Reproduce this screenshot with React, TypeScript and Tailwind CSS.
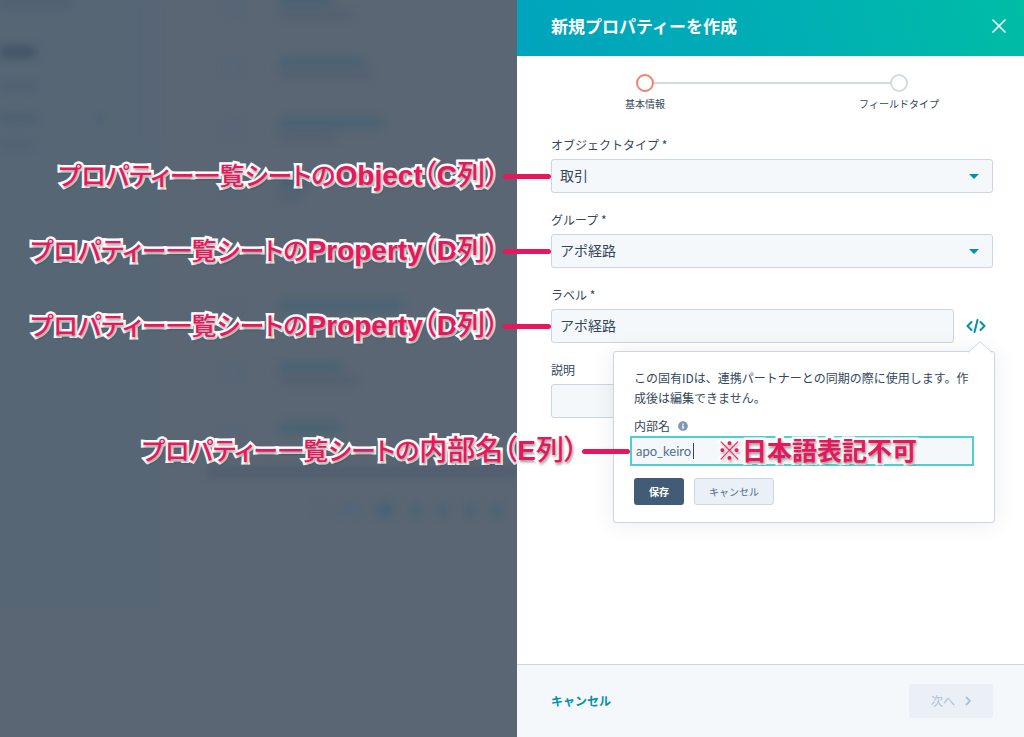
import type { ReactNode } from "react";
import { FaInfoCircle } from "react-icons/fa";

const ROWS = [
  { name: "w-[52px]", sub: "w-[72px]" },
  { name: "w-[84px]", sub: "w-[90px]" },
  { name: "w-[102px]", sub: "w-[55px]" },
  { name: "w-[30px]", sub: "w-5" },
  { name: "w-0", sub: "w-0" },
  { name: "w-[122px]", sub: "w-0" },
  { name: "w-[60px]", sub: "w-[76px]" },
  { name: "w-[60px]", sub: "w-0" },
];

const PAGES = [
  "w-1.5 bg-[#486580]/40",
  "w-4 bg-[#486580]/50",
  "w-4 bg-[#3d6178]/80",
  "w-2 bg-[#3d6178]/60",
  "w-2 bg-[#3d6178]/60",
  "w-2 bg-[#3d6178]/60",
  "w-2 bg-[#3d6178]/70",
];

function Backdrop() {
  return (
    <div aria-hidden="true" className="flex min-w-0 flex-1 items-start overflow-hidden bg-[#5a6673]">
      <div className="flex h-[609px] w-40 shrink-0 bg-[#566675]">
        <div className="flex flex-1 flex-col items-start">
          <div className="h-1.5 w-[72px] bg-[#46566a]/50 blur-[4px]" />
          <div className="mt-10 h-3 w-9 bg-[#3f5064]/80 blur-[4px]" />
          <div className="mt-6 h-2 w-9 bg-[#4a5a6b]/50 blur-[4px]" />
          <div className="mt-6 flex w-full items-center justify-between pr-10">
            <div className="h-2 w-9 bg-[#4a5a6b]/60 blur-[4px]" />
            <div className="size-2 bg-[#486078]/60 blur-[3px]" />
          </div>
          <div className="mt-5 h-2 w-8 bg-[#4a5a6b]/40 blur-[4px]" />
        </div>
        <div className="h-36 w-4 bg-[#586577] blur-[2px]" />
      </div>
      <div className="-mt-6 min-w-0 flex-1">
        {ROWS.map((row, i) => (
          <div key={i} className="flex h-[61px] items-center">
            <div className="ml-16 mr-8 size-5 shrink-0 bg-[#56657a]/50 blur-[3px]" />
            <div className="ml-1 flex flex-col gap-1">
              <div className={`h-2.5 ${row.name} bg-[#3c6074]/60 blur-[4px]`} />
              <div className={`h-2 ${row.sub} bg-[#4e5b70]/60 blur-[4px]`} />
            </div>
          </div>
        ))}
        <div className="ml-12 mt-1 h-2 bg-[#4a596b]/80 blur-[4px]" />
        <div className="ml-[157px] mt-7 flex items-center gap-[19px]">
          {PAGES.map((page, i) => (
            <div key={i} className={`h-3 shrink-0 ${page} blur-[4px]`} />
          ))}
        </div>
      </div>
    </div>
  );
}

function NoteText({ children }: { children: ReactNode }) {
  return (
    <span className="whitespace-nowrap font-['Liberation_Sans','Noto_Sans_CJK_JP',sans-serif] text-[28px] font-bold leading-none text-[#e8175d] [-webkit-text-stroke:5px_white] [font-feature-settings:'palt'] [paint-order:stroke_fill] [text-shadow:1px_2px_3px_rgba(0,0,0,0.45)]">
      {children}
    </span>
  );
}

function Callout({ target }: { target: ReactNode }) {
  return (
    <div className="pointer-events-none absolute inset-y-0 right-full z-20 flex items-center gap-1">
      <NoteText>
        <span className="text-[25px] font-medium">プロパティー一覧シートの</span>
        {target}
      </NoteText>
      <span className="h-[5px] w-12 rounded-full bg-[#e8175d]" />
    </div>
  );
}

function Column({ letter }: { letter: string }) {
  return (
    <>
      <span className="font-medium">（</span>
      {letter}
      <span className="font-medium">列）</span>
    </>
  );
}

function Label({ htmlFor, children }: { htmlFor: string; children: ReactNode }) {
  return (
    <label htmlFor={htmlFor} className="mb-1 block text-xs leading-5">
      {children}
    </label>
  );
}

const FIELD =
  "block h-[34px] w-full appearance-none rounded-[3px] border border-[#cbd6e2] bg-[#f5f8fa] px-2 pb-0.5 text-sm leading-5 text-[#33475b] outline-none";

function SelectField({ id, label, value, note }: { id: string; label: string; value: string; note: ReactNode }) {
  return (
    <div>
      <Label htmlFor={id}>{label}</Label>
      <div className="relative">
        <select id={id} className={FIELD} defaultValue={value}>
          <option>{value}</option>
        </select>
        <svg viewBox="0 0 10 5" className="pointer-events-none absolute inset-y-0 right-3.5 my-auto h-[5px] w-2.5 fill-[#0091ae]">
          <path d="M0 0h10L5 5z" />
        </svg>
        <Callout target={note} />
      </div>
    </div>
  );
}

function Step({ label, active }: { label: string; active?: boolean }) {
  return (
    <li className="flex w-20 flex-col items-center">
      <span className={`size-[18px] rounded-full border-2 bg-white ${active ? "border-[#f2826b]" : "border-[#d3dae4]"}`} />
      <span className="mt-0.5 whitespace-nowrap text-[10px] leading-5">{label}</span>
    </li>
  );
}

function InternalNamePopover() {
  return (
    <div className="absolute -right-0.5 top-full z-10 mt-2 w-[382px] rounded-[3px] border border-[#cbd6e2] bg-white px-5 pb-[17px] pt-4 shadow-[0_1px_24px_rgba(0,0,0,0.08)]">
      <svg viewBox="0 0 24 12" className="absolute -top-[11px] right-0.5 h-3 w-6">
        <path d="M0 12 12 1l12 11z" fill="white" />
        <path d="M0 11.5 12 .8l12 10.7" fill="none" stroke="#cbd6e2" />
      </svg>
      <p className="text-xs leading-5">この固有IDは、連携パートナーとの同期の際に使用します。作成後は編集できません。</p>
      <div className="mt-2 flex items-center gap-2">
        <label htmlFor="internal-name" className="text-xs leading-5">
          内部名
        </label>
        <FaInfoCircle className="size-2.5 text-[#7c98b6]" />
      </div>
      <div className="relative -ml-1">
        <input
          id="internal-name"
          defaultValue="apo_keiro"
          className="block h-[30px] w-full border-2 border-[#4fcfd0] bg-[#f5f8fa] px-1 font-['Lato','Noto_Sans_CJK_JP',sans-serif] text-[13px] text-[#516f90] outline-none"
        />
        <span className="absolute inset-y-0 left-[63px] my-auto h-4 w-px bg-[#33475b]" />
        <div className="pointer-events-none absolute inset-y-0 left-[87px] z-20 flex items-center">
          <NoteText>
            <span className="text-[25px]">※日本語表記不可</span>
          </NoteText>
        </div>
        <Callout
          target={
            <>
              <span className="font-medium">内部名</span>
              <Column letter="E" />
            </>
          }
        />
      </div>
      <div className="mt-3 flex gap-2.5">
        <button type="button" className="h-[27px] w-[50px] rounded-[3px] bg-[#425b76] text-[10px] font-bold text-white">
          保存
        </button>
        <button type="button" className="h-[27px] w-20 rounded-[3px] border border-[#cbd6e2] bg-[#eaf0f6] text-[10px] text-[#506e91]">
          キャンセル
        </button>
      </div>
    </div>
  );
}

export default function App() {
  return (
    <div className="flex min-h-screen font-['Noto_Sans_CJK_JP',sans-serif] text-[#33475b]">
      <Backdrop />
      <aside className="flex w-[507px] shrink-0 flex-col bg-white">
        <header className="flex h-14 items-center justify-between bg-[linear-gradient(75deg,#00a4bd,#00afb4_55%,#00bda5)] pb-[5px] pl-[34px] pr-[18px] text-white">
          <h1 className="text-[17px] font-bold leading-6">新規プロパティーを作成</h1>
          <button type="button" aria-label="閉じる">
            <svg viewBox="0 0 14 14" className="size-3.5 stroke-white stroke-[1.6]" fill="none" strokeLinecap="round">
              <path d="m1 1 12 12M13 1 1 13" />
            </svg>
          </button>
        </header>

        <main className="flex-1 pl-[34px] pr-[31px] pt-[18px]">
          <ol className="mx-auto flex w-[334px] items-start">
            <Step label="基本情報" active />
            <li aria-hidden="true" className="-mx-[31px] mt-2 h-0.5 flex-1 bg-[#d3dae4]" />
            <Step label="フィールドタイプ" />
          </ol>

          <form className="mt-[21px] flex flex-col gap-[17px] pb-10">
            <SelectField
              id="object-type"
              label="オブジェクトタイプ *"
              value="取引"
              note={
                <>
                  Object
                  <Column letter="C" />
                </>
              }
            />
            <SelectField
              id="group"
              label="グループ *"
              value="アポ経路"
              note={
                <>
                  Property
                  <Column letter="D" />
                </>
              }
            />
            <div className="relative">
              <Label htmlFor="label">ラベル *</Label>
              <div className="flex items-center">
                <div className="relative flex-1">
                  <input id="label" defaultValue="アポ経路" className={FIELD} />
                  <Callout
                    target={
                      <>
                        Property
                        <Column letter="D" />
                      </>
                    }
                  />
                </div>
                <button type="button" aria-label="内部名を編集" className="ml-3 mr-[7px]">
                  <svg viewBox="0 0 20 14" className="h-3.5 w-5 stroke-[#0091ae] stroke-2" fill="none" strokeLinecap="round" strokeLinejoin="round">
                    <path d="M5.5 3 1.5 7l4 4M14.500 3l4 4-4 4M11.500 1 8.500 13" />
                  </svg>
                </button>
              </div>
              <InternalNamePopover />
            </div>
            <div>
              <Label htmlFor="description">説明</Label>
              <input id="description" className={FIELD} />
            </div>
          </form>
        </main>

        <footer className="flex h-[73px] items-center justify-between border-t border-[#cbd6e2] bg-[#f5f8fa] pl-[34px] pr-[31px]">
          <button type="button" className="text-xs font-bold text-[#0091ae]">
            キャンセル
          </button>
          <button
            type="button"
            disabled
            className="flex h-[34px] w-[84px] items-center justify-center gap-2.5 rounded-[3px] bg-[#eaf0f6] text-xs text-[#b0c1d4]"
          >
            次へ
            <svg viewBox="0 0 6 10" className="h-2.5 w-1.5 stroke-[#b0c1d4] stroke-[1.8]" fill="none">
              <path d="m1 1 4 4-4 4" />
            </svg>
          </button>
        </footer>
      </aside>
    </div>
  );
}
